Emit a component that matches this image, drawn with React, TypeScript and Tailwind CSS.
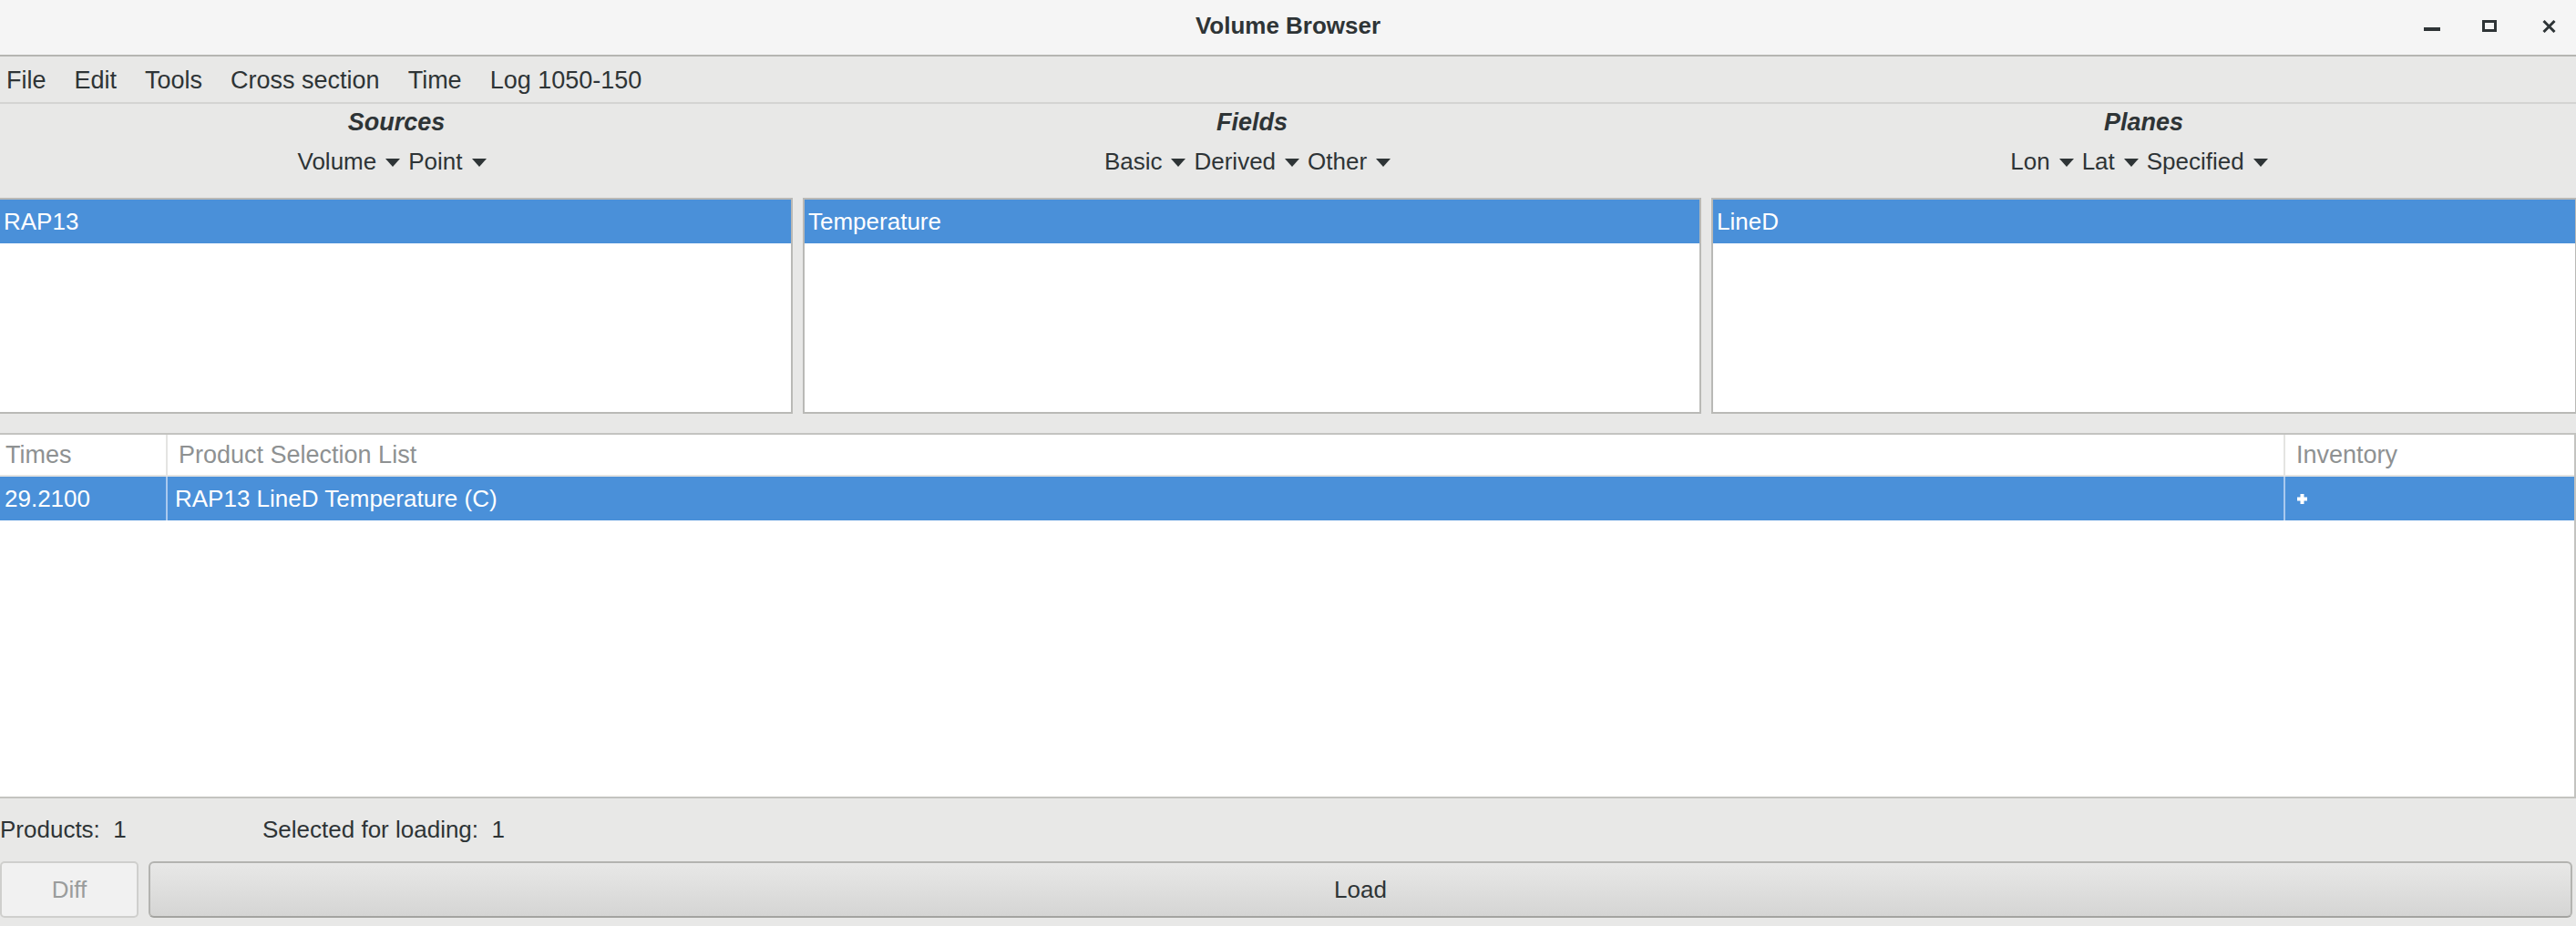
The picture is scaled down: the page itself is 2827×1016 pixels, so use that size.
import React from 'react';

// Small filled triangle used by the header dropdowns
const Caret = () => (
  <svg width="16" height="9" viewBox="0 0 16 9" className="mx-[10px] mt-[2px]">
    <path d="M0 0 H16 L8 9 Z" fill="#2e3436" />
  </svg>
);

const Dropdown = ({ items }: { items: string[] }) => (
  <div className="flex items-center text-[26px]">
    {items.map((it, i) => (
      <React.Fragment key={it}>
        <span className={i === 0 ? '' : '-ml-[1px]'}>{it}</span>
        <Caret />
      </React.Fragment>
    ))}
  </div>
);

const columns = [
  { title: 'Sources', items: ['Volume', 'Point'], selected: 'RAP13' },
  { title: 'Fields', items: ['Basic', 'Derived', 'Other'], selected: 'Temperature' },
  { title: 'Planes', items: ['Lon', 'Lat', 'Specified'], selected: 'LineD' },
];

export default function App() {
  return (
    <div className="w-[2827px] h-[1016px] flex flex-col overflow-hidden bg-[#e8e8e7] text-[#2e3436] font-['Liberation_Sans',sans-serif]">
      {/* --- TITLE BAR --- */}
      <div className="relative h-[62px] shrink-0 flex items-center justify-center bg-[#f5f5f5] border-b-2 border-[#b5b5b2] pb-[4px]">
        <span className="text-[26px] font-bold">Volume Browser</span>
        <div className="absolute right-[22px] top-[21px] flex items-start">
          <svg width="18" height="15" viewBox="0 0 18 15">
            <rect x="0" y="9" width="18" height="4" fill="#2e3436" />
          </svg>
          <svg width="16" height="13" viewBox="0 0 16 13" className="ml-[46px] mt-[1px]">
            <rect x="1.5" y="1.5" width="13" height="10" fill="none" stroke="#2e3436" strokeWidth="3" />
          </svg>
          <svg width="15" height="14" viewBox="0 0 15 14" className="ml-[50px] mt-[1px]">
            <path d="M1.5 1 L13.5 13 M13.5 1 L1.5 13" stroke="#2e3436" strokeWidth="3" />
          </svg>
        </div>
      </div>

      {/* --- MENU BAR --- */}
      <div className="h-[52px] shrink-0 flex items-center gap-[31px] pl-[7px] pt-[2px] text-[27px] border-b-2 border-[#d4d4d2]">
        <span>File</span>
        <span>Edit</span>
        <span>Tools</span>
        <span>Cross section</span>
        <span>Time</span>
        <span>Log 1050-150</span>
      </div>

      {/* --- SOURCES / FIELDS / PLANES --- */}
      <div className="grid grid-cols-[870px_986px_1fr] gap-x-[11px]">
        {columns.map((c) => (
          <div key={c.title} className="flex flex-col items-center">
            <div className="h-[38px] flex items-center pt-[2px] text-[27px] font-bold italic">{c.title}</div>
            <div className="h-[50px] flex items-center">
              <Dropdown items={c.items} />
            </div>
            <div className="h-[15px]" />
          </div>
        ))}
      </div>
      <div className="h-[237px] shrink-0 grid grid-cols-[870px_986px_1fr] gap-x-[11px]">
        {columns.map((c, i) => (
          <div
            key={c.title}
            className={`bg-white border-2 border-[#b9b9b6] ${i === 0 ? 'border-l-0' : ''} ${i === 2 ? 'border-r' : ''}`}
          >
            <div className="h-[48px] flex items-center pl-[4px] bg-[#4a90d9] text-white text-[26px]">{c.selected}</div>
          </div>
        ))}
      </div>

      <div className="h-[21px] shrink-0" />

      {/* --- PRODUCT TABLE --- */}
      <div className="h-[401px] shrink-0 bg-white border-y-2 border-[#c3c3c0] border-r-2">
        <div className="h-[46px] grid grid-cols-[184px_1fr_317px] text-[27px] text-[#8e9192] border-b-2 border-[#e4e4e2]">
          <div className="flex items-center pl-[6px] border-r-2 border-[#e4e4e2]">Times</div>
          <div className="flex items-center pl-[12px] border-r-2 border-[#e4e4e2]">Product Selection List</div>
          <div className="flex items-center pl-[12px]">Inventory</div>
        </div>
        <div className="h-[48px] grid grid-cols-[184px_1fr_317px] bg-[#4a90d9] text-white text-[26px]">
          <div className="flex items-center pl-[5px] border-r-2 border-[#a9c9ee]">29.2100</div>
          <div className="flex items-center pl-[8px] border-r-2 border-[#a9c9ee]">RAP13 LineD Temperature (C)</div>
          <div className="flex items-center pl-[12px]">
            <svg width="13" height="13" viewBox="0 0 13 13">
              <path d="M6.5 1 V12 M1 6.5 H12" stroke="#ffffff" strokeWidth="4" />
            </svg>
          </div>
        </div>
      </div>

      {/* --- STATUS --- */}
      <div className="h-[69px] shrink-0 flex items-center text-[26px] whitespace-pre">
        <span className="w-[288px]">Products:  1</span>
        <span>Selected for loading:  1</span>
      </div>

      {/* --- BUTTONS --- */}
      <div className="h-[62px] shrink-0 flex gap-[11px] pr-[4px]">
        <button className="w-[152px] h-full rounded-[5px] border-2 border-[#cfcfcd] bg-[#f1f1f1] text-[26px] text-[#9a9c9c]">
          Diff
        </button>
        <button className="flex-1 h-full rounded-[6px] border-2 border-[#b3b3b0] border-b-[#a3a3a0] bg-gradient-to-b from-[#e8e8e7] to-[#d5d5d4] text-[26px] text-[#2e3436]">
          Load
        </button>
      </div>
    </div>
  );
}
